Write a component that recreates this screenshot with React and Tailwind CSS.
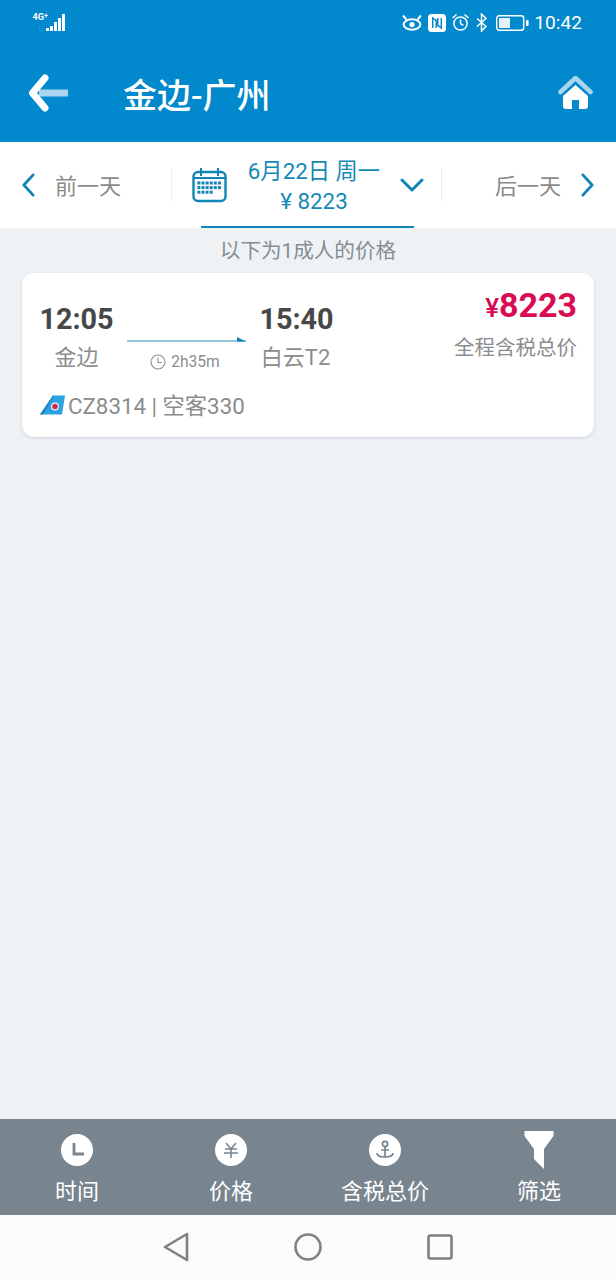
import React from "react";

function Signal() {
  return (
    <svg width="34" height="22" viewBox="0 0 34 22" className="block">
      <text x="0.5" y="8" fontSize="9.5" fontWeight="700" fill="#fff" fontFamily="Roboto, sans-serif" textLength="11.5" lengthAdjust="spacingAndGlyphs">4G</text>
      <text x="12" y="6" fontSize="7" fontWeight="700" fill="#fff" fontFamily="Roboto, sans-serif">+</text>
      <text x="6" y="19" fontSize="6" fill="#6fb9df" fontFamily="Roboto, sans-serif">↑↓</text>
      <rect x="14" y="16" width="3" height="3" fill="#fff" />
      <rect x="18" y="14" width="3" height="5" fill="#fff" />
      <rect x="22" y="10" width="3" height="9" fill="#fff" />
      <rect x="26" y="6" width="3" height="13" fill="#fff" />
      <rect x="30" y="2" width="3" height="17" fill="#fff" />
    </svg>
  );
}

function StatusIcons() {
  return (
    <div className="flex items-center">
      <svg width="20" height="17" viewBox="0 0 20 17" fill="none" stroke="#fff" strokeWidth="1.9">
        <path d="M1 1.5l3.5 4M19 1.5l-3.5 4" />
        <ellipse cx="10" cy="10.5" rx="8.4" ry="5.2" />
        <circle cx="10" cy="10.5" r="2.6" fill="#fff" stroke="none" />
      </svg>
      <svg width="18" height="18" viewBox="0 0 18 18" className="ml-[6px]">
        <rect x="0" y="0" width="18" height="18" rx="3.5" fill="#fff" />
        <path d="M4.7 14V4l3.6 2.6V14M13.3 4v10L9.7 11.4V4" fill="none" stroke="#0288cc" strokeWidth="1.5" />
      </svg>
      <svg width="19" height="19" viewBox="0 0 19 19" fill="none" stroke="#fff" strokeWidth="1.5" className="ml-[5px]">
        <circle cx="9.5" cy="10.5" r="6.6" />
        <path d="M9.5 6.5V10.5l2.8 1.8M1.5 5L5.5 1.5M17.5 5L13.5 1.5" />
      </svg>
      <svg width="13" height="19" viewBox="0 0 13 19" fill="none" stroke="#fff" strokeWidth="1.5" className="ml-[5px]">
        <path d="M2 5.5l9 8-4.5 4.5V1l4.5 4.5-9 8" />
      </svg>
      <svg width="33" height="16" viewBox="0 0 33 16" className="ml-[8px]">
        <rect x="0.7" y="0.7" width="27" height="14.6" rx="2.5" fill="none" stroke="#fff" strokeWidth="1.4" />
        <rect x="3" y="3" width="11" height="10" fill="#e8f3f9" />
        <rect x="30" y="5" width="2.6" height="6" rx="1" fill="#fff" />
      </svg>
    </div>
  );
}

function Calendar() {
  const dots = [];
  for (let r = 0; r < 3; r++) {
    for (let c = 0; c < (r === 2 ? 4 : 6); c++) {
      dots.push(<rect key={r + "-" + c} x={5.4 + c * 4.1} y={14.5 + r * 4.6} width="3" height="3" fill="#1184b6" />);
    }
  }
  return (
    <svg width="36" height="36" viewBox="0 0 36 36" fill="none">
      <rect x="1.5" y="5" width="32" height="29" rx="4.5" stroke="#1184b6" strokeWidth="2.4" />
      <path d="M1.5 11h32M9 1v8M26 1v8" stroke="#1184b6" strokeWidth="2" />
      {dots}
    </svg>
  );
}

function Chevron({ d }) {
  return (
    <svg width="15" height="24" viewBox="0 0 16 26" fill="none" stroke="#1184b6" strokeWidth="3" strokeLinecap="round" strokeLinejoin="round">
      <path d={d} />
    </svg>
  );
}

function Tail() {
  return (
    <svg width="28" height="22" viewBox="0 0 28 22" className="shrink-0">
      <path d="M0 19.5 L13 0.5 H25 L22 19.5 Z" fill="#2aa3df" />
      <path d="M0 19.5 L13 0.5 H14 L3 19.5 Z" fill="#1f7fc4" />
      <circle cx="15" cy="11.5" r="4" fill="#e9f3f9" />
      <circle cx="15" cy="11.5" r="2.8" fill="#cf2b4d" />
    </svg>
  );
}

function ToolIcon({ children }) {
  return (
    <div className="w-8 h-8 rounded-full bg-white flex items-center justify-center">
      {children}
    </div>
  );
}

function ToolItem({ icon, label }) {
  return (
    <div className="flex-1 flex flex-col items-center pt-[15px]">
      <div className="h-8 flex items-center justify-center">{icon}</div>
      <div className="mt-[11px] text-[22px] leading-[30px] text-white">{label}</div>
    </div>
  );
}

export default function App() {
  return (
    <div className="w-[616px] h-[1280px] flex flex-col bg-[#eef2f5] overflow-hidden font-['Roboto','Noto_Sans_CJK_SC',sans-serif]">
      {/* Blue header */}
      <div className="h-[142px] bg-[#0288cc] shrink-0">
        <div className="h-[46px] flex items-center justify-between pl-[32px] pr-[34px]">
          <Signal />
          <div className="flex items-center gap-[5px]">
            <StatusIcons />
            <span className="text-[19.2px] text-white leading-none">10:42</span>
          </div>
        </div>
        <div className="h-[96px] flex items-center pl-[28px] pr-[23px] pb-[2px]">
          <svg width="41" height="38" viewBox="0 0 41 38" className="shrink-0">
            <rect x="11" y="15.5" width="29" height="7" fill="#a9d6ee" />
            <path d="M17 4 L4.5 19 L17 34" fill="none" stroke="#fff" strokeWidth="7" strokeLinecap="round" strokeLinejoin="round" />
          </svg>
          <div className="ml-[54px] pt-[5px] flex-1 text-[34px] leading-none font-medium text-white">金边-广州</div>
          <svg width="35" height="36" viewBox="0 0 35 36" className="shrink-0">
            <path d="M2.5 17 L17.5 3 L32.5 17" fill="none" stroke="#a9d6ee" strokeWidth="4.5" strokeLinecap="round" strokeLinejoin="round" />
            <path d="M17.5 10 L30 21 V31 q0 3 -3 3 H21 V25 H14 V34 H8 q-3 0 -3 -3 V21 Z" fill="#fff" />
          </svg>
        </div>
      </div>

      {/* Date bar */}
      <div className="h-[86px] bg-white shrink-0 flex items-center relative">
        <div className="w-[172px] flex items-center pl-[21px] h-[34px] border-r border-[#eceeef] shrink-0">
          <Chevron d="M13 2 L3 13 L13 24" />
          <span className="ml-[19px] pt-[2px] text-[22px] text-[#8b8b8b]">前一天</span>
        </div>
        <div className="flex-1 flex items-center pl-[20px] pr-[17px]">
          <Calendar />
          <div className="flex-1 text-center text-[22.3px] leading-[30px] text-[#1389b5] pt-[2px]">
            <div>6月22日 周一</div>
            <div>¥ 8223</div>
          </div>
          <svg width="24" height="16" viewBox="0 0 24 16" fill="none" stroke="#1184b6" strokeWidth="3" strokeLinecap="round" strokeLinejoin="round">
            <path d="M2 3 L12 13 L22 3" />
          </svg>
        </div>
        <div className="w-[175px] flex items-center justify-end pr-[21px] h-[34px] border-l border-[#eceeef] shrink-0">
          <span className="mr-[19px] pt-[2px] text-[22px] text-[#8b8b8b]">后一天</span>
          <Chevron d="M3 2 L13 13 L3 24" />
        </div>
        <div className="absolute left-[201px] bottom-0 w-[213px] h-[2px] bg-[#1184b6]" />
      </div>

      <div className="h-[45px] pt-[2px] flex items-center justify-center text-[20.6px] text-[#868d94] shrink-0">以下为1成人的价格</div>

      {/* Flight card */}
      <div className="mx-[22px] h-[164px] bg-white rounded-[12px] shadow-[0_1px_3px_rgba(120,135,150,0.3)] shrink-0 pl-[18px] pr-[17px] flex flex-col">
        <div className="flex justify-between">
          <div className="flex mt-[26px]">
            <div className="w-[73px] flex flex-col items-center">
              <div className="text-[28.8px] leading-[40px] font-bold text-[#474747] whitespace-nowrap">12:05</div>
              <div className="text-[22px] leading-[38px] text-[#8c8c8c]">金边</div>
            </div>
            <div className="w-[119px] ml-[14px] flex flex-col items-center mt-[37px]">
              <svg width="119" height="6" viewBox="0 0 119 6" className="block">
                <path d="M0 5 H119" stroke="#2d8fbf" strokeWidth="1" />
                <path d="M110 1 L119 5.5 H110 Z" fill="#1184b6" />
              </svg>
              <div className="flex items-center gap-[5px] mt-[10px] mr-[3px]">
                <svg width="16" height="16" viewBox="0 0 16 16" fill="none" stroke="#8f8f8f" strokeWidth="1.1">
                  <circle cx="8" cy="8" r="7" />
                  <path d="M8 3.5V8.5H12" />
                </svg>
                <span className="text-[15.6px] leading-[20px] text-[#8c8c8c]">2h35m</span>
              </div>
            </div>
            <div className="w-[73px] ml-[14px] flex flex-col items-center">
              <div className="text-[28.8px] leading-[40px] font-bold text-[#474747] whitespace-nowrap">15:40</div>
              <div className="mr-[2px] text-[22px] leading-[38px] text-[#8c8c8c] whitespace-nowrap">白云T2</div>
            </div>
          </div>
          <div className="flex flex-col items-end mt-[10px]">
            <div className="text-[#d90b52] font-bold text-[34px] leading-[44px]"><span className="text-[26px] font-medium">¥</span>8223</div>
            <div className="text-[20.5px] leading-[36px] text-[#8c8c8c]">全程含税总价</div>
          </div>
        </div>
        <div className="flex items-center mt-[14px]">
          <Tail />
          <span className="text-[22.3px] leading-[30px] text-[#8c8c8c]">CZ8314 | 空客330</span>
        </div>
      </div>

      <div className="flex-1" />

      {/* Bottom toolbar */}
      <div className="h-[96px] bg-[#78858f] flex shrink-0">
        <ToolItem
          label="时间"
          icon={
            <ToolIcon>
              <svg width="18" height="18" viewBox="0 0 18 18" fill="none" stroke="#78858f" strokeWidth="2.8">
                <path d="M6 2V13H16" />
              </svg>
            </ToolIcon>
          }
        />
        <ToolItem
          label="价格"
          icon={
            <ToolIcon>
              <svg width="18" height="18" viewBox="0 0 18 18" fill="none" stroke="#78858f" strokeWidth="1.6">
                <path d="M4 2L9 8L14 2M3 8H15M2 12H16M9 8V17" />
              </svg>
            </ToolIcon>
          }
        />
        <ToolItem
          label="含税总价"
          icon={
            <ToolIcon>
              <svg width="22" height="22" viewBox="0 0 22 22" fill="none" stroke="#78858f" strokeWidth="1.7">
                <circle cx="11" cy="5" r="2.6" />
                <path d="M11 8V18M7 11H15M3 14c0 3 4 4 8 4s8-1 8-4" />
              </svg>
            </ToolIcon>
          }
        />
        <ToolItem
          label="筛选"
          icon={
            <svg width="30" height="38" viewBox="0 0 30 38">
              <path d="M0.5 0 H29.5 V5 L20 18 V38 L10 28 V18 L0.5 5 Z" fill="#fff" />
            </svg>
          }
        />
      </div>

      {/* Android nav */}
      <div className="h-[65px] bg-[#fbfbfb] shrink-0 flex items-center justify-center gap-[105px] pb-[1px]">
        <svg width="26" height="30" viewBox="0 0 26 30" fill="none" stroke="#808080" strokeWidth="2.6" strokeLinejoin="round">
          <path d="M24 2 L2 15 L24 28 Z" />
        </svg>
        <svg width="28" height="28" viewBox="0 0 28 28" fill="none" stroke="#808080" strokeWidth="2.6">
          <circle cx="14" cy="14" r="12.5" />
        </svg>
        <svg width="26" height="26" viewBox="0 0 26 26" fill="none" stroke="#808080" strokeWidth="2.6">
          <rect x="1.5" y="1.5" width="23" height="23" rx="2" />
        </svg>
      </div>
    </div>
  );
}
